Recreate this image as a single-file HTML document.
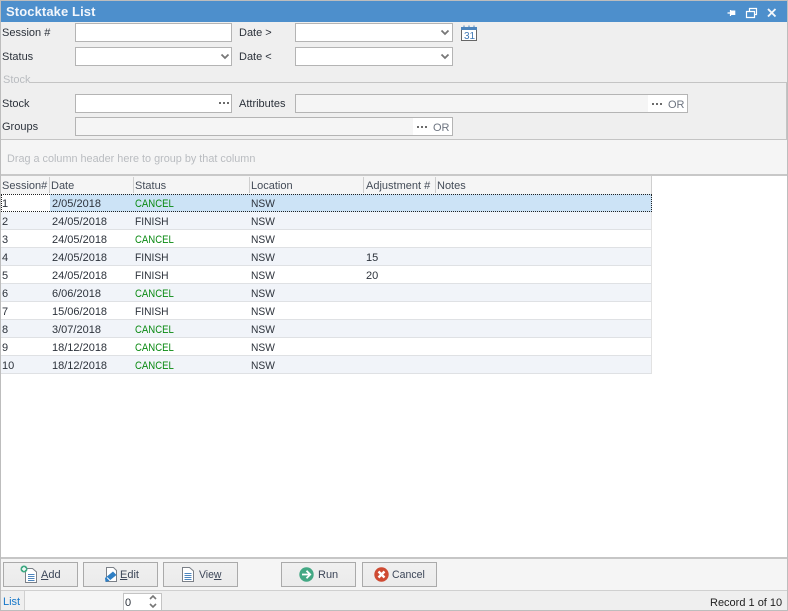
<!DOCTYPE html>
<html><head><meta charset="utf-8">
<style>
html,body{margin:0;padding:0;width:788px;height:611px;overflow:hidden;background:#fff}
body{font-family:"Liberation Sans",sans-serif;font-size:11px;color:#2c323b;position:relative}
div,span.a,svg.a{position:absolute;box-sizing:border-box}
.t{white-space:nowrap;line-height:14px;height:14px}
.in{background:#fff;border:1px solid #b4b4b4;height:19px}
.dis{background:#f5f5f5}
.row{left:1px;width:651px;height:18px;border-bottom:1px solid #dfe1e4;border-right:1px solid #e2e2e2}
.c{position:absolute;top:3px;white-space:nowrap;line-height:14px;transform-origin:0 50%}
.g{color:#0a8a12;transform:scaleX(.87);left:134px}
.f{transform:scaleX(.93);left:134px}
.n{transform:scaleX(.93);left:250px}
.h{top:179px;color:#444c58}
.sep{top:177px;width:1px;height:16px;background:#cfcfcf}
.btn{top:562px;height:25px;width:75px;border:1px solid #aaa;background:linear-gradient(#f0f0f0,#ebebeb)}
.bl{position:absolute;top:5px;white-space:nowrap;line-height:14px;color:#3c4658}
u{text-decoration:underline}
.d{position:absolute;width:2px;height:2px;background:#6b6b6b}
</style></head><body>
<div style="left:0;top:0;width:788px;height:611px;background:#fff;border:1px solid #bdbdbd"></div>

<div style="left:1px;top:1px;width:786px;height:21px;background:#4d8fcc"></div>
<div class="t" style="left:6px;top:4px;color:#f2f6fb;font-weight:bold;font-size:13px;line-height:15px;letter-spacing:.1px">Stocktake List</div>
<svg class="a" style="left:725px;top:5px" width="55" height="16" viewBox="0 0 55 16">
<path d="M2.5 8H5.5M5.5 5V11" stroke="#fff" stroke-width="1.2" fill="none"/><rect x="5.5" y="5.5" width="4.8" height="4.5" fill="#fff"/>
<path d="M21.5 6.5H29.5V12.5H21.5ZM24.5 6V3.5H31.5V9.5H30" stroke="#fff" stroke-width="1.2" fill="none"/>
<path d="M43 4L50.5 11.5M50.5 4L43 11.5" stroke="#f4f7fb" stroke-width="1.9" fill="none"/>
</svg>

<div style="left:1px;top:22px;width:786px;height:117px;background:#efefef"></div>

<div class="t" style="left:2px;top:26px">Session #</div>
<div class="in" style="left:75px;top:23px;width:157px"></div>
<div class="t" style="left:239px;top:26px">Date &gt;</div>
<div class="in" style="left:295px;top:23px;width:158px"></div>
<svg class="a" style="left:440px;top:29px" width="10" height="8"><path d="M1.5 1.5L5 5L8.5 1.5" stroke="#777" stroke-width="1.8" fill="none"/></svg>
<svg class="a" style="left:461px;top:25px" width="17" height="17" viewBox="0 0 17 17">
<rect x="0.5" y="3.5" width="15" height="12" fill="#fff" stroke="#666"/>
<rect x="0" y="2" width="16" height="3" fill="#4d85bd"/>
<path d="M3 0.5V3M8 0.5V3M13 0.5V3" stroke="#4d85bd"/>
<text x="3" y="14" font-family="Liberation Sans" font-size="10" fill="#3f78b5">31</text>
</svg>

<div class="t" style="left:2px;top:50px">Status</div>
<div class="in" style="left:75px;top:47px;width:157px"></div>
<svg class="a" style="left:220px;top:53px" width="10" height="8"><path d="M1.5 1.5L5 5L8.5 1.5" stroke="#777" stroke-width="1.8" fill="none"/></svg>
<div class="t" style="left:239px;top:50px">Date &lt;</div>
<div class="in" style="left:295px;top:47px;width:158px"></div>
<svg class="a" style="left:440px;top:53px" width="10" height="8"><path d="M1.5 1.5L5 5L8.5 1.5" stroke="#777" stroke-width="1.8" fill="none"/></svg>

<div class="t" style="left:3px;top:73px;color:#b9bcc0">Stock</div>
<div style="left:30px;top:82px;width:757px;height:1px;background:#c4c4c4"></div>
<div style="left:786px;top:82px;width:1px;height:57px;background:#c4c4c4"></div>

<div class="t" style="left:2px;top:97px">Stock</div>
<div class="in" style="left:75px;top:94px;width:157px"></div>
<span class="d a" style="left:219px;top:102px"></span><span class="d a" style="left:223px;top:102px"></span><span class="d a" style="left:227px;top:102px"></span>

<div class="t" style="left:239px;top:97px">Attributes</div>
<div class="in dis" style="left:295px;top:94px;width:393px"></div>
<div style="left:648px;top:95px;width:39px;height:17px;background:#fff"></div>
<span class="d a" style="left:652px;top:103px"></span><span class="d a" style="left:656px;top:103px"></span><span class="d a" style="left:660px;top:103px"></span>
<div class="t" style="left:668px;top:98px;color:#6d7480">OR</div>

<div class="t" style="left:2px;top:120px">Groups</div>
<div class="in dis" style="left:75px;top:117px;width:378px"></div>
<div style="left:413px;top:118px;width:39px;height:17px;background:#fff"></div>
<span class="d a" style="left:417px;top:126px"></span><span class="d a" style="left:421px;top:126px"></span><span class="d a" style="left:425px;top:126px"></span>
<div class="t" style="left:433px;top:121px;color:#6d7480">OR</div>

<div style="left:1px;top:139px;width:786px;height:1px;background:#c4c4c4"></div>
<div style="left:1px;top:140px;width:786px;height:34px;background:#f5f5f5"></div>
<div class="t" style="left:7px;top:152px;color:#b9bcc0;font-size:10.85px">Drag a column header here to group by that column</div>
<div style="left:1px;top:174px;width:786px;height:2px;background:#c8c8c8"></div>

<div style="left:1px;top:176px;width:651px;height:18px;background:#f5f5f5;border-right:1px solid #cfcfcf"></div>
<div class="t h" style="left:2px">Session#</div>
<div class="t h" style="left:51px">Date</div>
<div class="t h" style="left:135px">Status</div>
<div class="t h" style="left:251px">Location</div>
<div class="t h" style="left:366px">Adjustment #</div>
<div class="t h" style="left:437px">Notes</div>
<div class="sep" style="left:49px"></div>
<div class="sep" style="left:133px"></div>
<div class="sep" style="left:249px"></div>
<div class="sep" style="left:363px"></div>
<div class="sep" style="left:435px"></div>

<div class="row" style="top:194px;background:#fff;border:0"><div style="position:absolute;left:49px;top:0;width:602px;height:18px;background:#cce3f6"></div>
<div style="position:absolute;left:0;top:0;width:651px;height:18px;border:1px dotted #222"></div>
<span class="c" style="left:1px">1</span><span class="c" style="left:51px">2/05/2018</span><span class="c g">CANCEL</span><span class="c n">NSW</span></div>
<div class="row" style="top:212px;background:#f1f4f9"><span class="c" style="left:1px">2</span><span class="c" style="left:51px">24/05/2018</span><span class="c f">FINISH</span><span class="c n">NSW</span></div>
<div class="row" style="top:230px;background:#fff"><span class="c" style="left:1px">3</span><span class="c" style="left:51px">24/05/2018</span><span class="c g">CANCEL</span><span class="c n">NSW</span></div>
<div class="row" style="top:248px;background:#f1f4f9"><span class="c" style="left:1px">4</span><span class="c" style="left:51px">24/05/2018</span><span class="c f">FINISH</span><span class="c n">NSW</span><span class="c" style="left:365px">15</span></div>
<div class="row" style="top:266px;background:#fff"><span class="c" style="left:1px">5</span><span class="c" style="left:51px">24/05/2018</span><span class="c f">FINISH</span><span class="c n">NSW</span><span class="c" style="left:365px">20</span></div>
<div class="row" style="top:284px;background:#f1f4f9"><span class="c" style="left:1px">6</span><span class="c" style="left:51px">6/06/2018</span><span class="c g">CANCEL</span><span class="c n">NSW</span></div>
<div class="row" style="top:302px;background:#fff"><span class="c" style="left:1px">7</span><span class="c" style="left:51px">15/06/2018</span><span class="c f">FINISH</span><span class="c n">NSW</span></div>
<div class="row" style="top:320px;background:#f1f4f9"><span class="c" style="left:1px">8</span><span class="c" style="left:51px">3/07/2018</span><span class="c g">CANCEL</span><span class="c n">NSW</span></div>
<div class="row" style="top:338px;background:#fff"><span class="c" style="left:1px">9</span><span class="c" style="left:51px">18/12/2018</span><span class="c g">CANCEL</span><span class="c n">NSW</span></div>
<div class="row" style="top:356px;background:#f1f4f9"><span class="c" style="left:1px">10</span><span class="c" style="left:51px">18/12/2018</span><span class="c g">CANCEL</span><span class="c n">NSW</span></div>

<div style="left:1px;top:557px;width:786px;height:2px;background:#c6c6c6"></div>
<div style="left:1px;top:559px;width:786px;height:31px;background:#f5f5f5"></div>

<div class="btn" style="left:3px"><span class="bl" style="left:37px"><u>A</u>dd</span>
<svg style="position:absolute;left:16px;top:2px" width="18" height="19" viewBox="0 0 18 19"><path d="M5.5 3.5H12.5L16.5 7V17.5H5.5Z" fill="#fff" stroke="#7b8087"/><path d="M8 9.5H14.5M8 11.5H14.5M8 13.5H14.5M8 15.5H14.5" stroke="#4d85bd"/><circle cx="4" cy="4" r="3.5" fill="#3fa982"/><path d="M2 4H6M4 2V6" stroke="#fff" stroke-width="1.4"/></svg></div>
<div class="btn" style="left:83px"><span class="bl" style="left:36px"><u>E</u>dit</span>
<svg style="position:absolute;left:20px;top:2px" width="14" height="19" viewBox="0 0 14 19"><path d="M2.5 2.5H9.5L12.5 5.5V16.5H2.5Z" fill="#fff" stroke="#7b8087"/><path d="M1 13L9 6.5L12.5 10L5 16L1.5 17Z" fill="#2f7fc4"/><path d="M3 12.5L6 15.5" stroke="#fff"/></svg></div>
<div class="btn" style="left:163px"><span class="bl" style="left:35px;transform:scaleX(.95);transform-origin:0 50%">Vie<u>w</u></span>
<svg style="position:absolute;left:18px;top:2px" width="14" height="19" viewBox="0 0 14 19"><path d="M0.5 2.5H7.5L11.5 6V16.5H0.5Z" fill="#fff" stroke="#7b8087"/><path d="M2.5 8.5H9.5M2.5 10.5H9.5M2.5 12.5H9.5M2.5 14.5H9.5" stroke="#4d85bd"/></svg></div>
<div class="btn" style="left:281px"><span class="bl" style="left:36px">Run</span>
<svg style="position:absolute;left:17px;top:4px" width="15" height="15" viewBox="0 0 15 15"><circle cx="7.5" cy="7.5" r="7.2" fill="#43a884"/><path d="M3 7.5H11M7.5 3.8L11.2 7.5L7.5 11.2" stroke="#fff" stroke-width="1.8" fill="none"/></svg></div>
<div class="btn" style="left:362px"><span class="bl" style="left:29px;transform:scaleX(.96);transform-origin:0 50%">Cancel</span>
<svg style="position:absolute;left:11px;top:4px" width="15" height="15" viewBox="0 0 15 15"><circle cx="7.5" cy="7.5" r="7.2" fill="#cf4b33"/><path d="M4.5 4.5L10.5 10.5M10.5 4.5L4.5 10.5" stroke="#fff" stroke-width="2.4" fill="none"/></svg></div>

<div style="left:1px;top:590px;width:786px;height:20px;background:#efefef;border-top:1px solid #d0d0d0"></div>
<div class="t" style="left:3px;top:595px;color:#1577c9">List</div>
<div style="left:24px;top:591px;width:1px;height:19px;background:#d0d0d0"></div>
<div style="left:25px;top:591px;width:98px;height:19px;background:#f5f5f5"></div>
<div style="left:123px;top:593px;width:39px;height:17px;background:#fff;border:1px solid #c4c4c4;border-bottom:0"></div>
<div class="t" style="left:125px;top:596px">0</div>
<svg class="a" style="left:148px;top:594px" width="10" height="16"><path d="M2 5L5 2L8 5M2 10L5 13L8 10" stroke="#777" stroke-width="1.6" fill="none"/></svg>
<div class="t" style="left:710px;top:596px;color:#222">Record 1 of 10</div>
</body></html>
